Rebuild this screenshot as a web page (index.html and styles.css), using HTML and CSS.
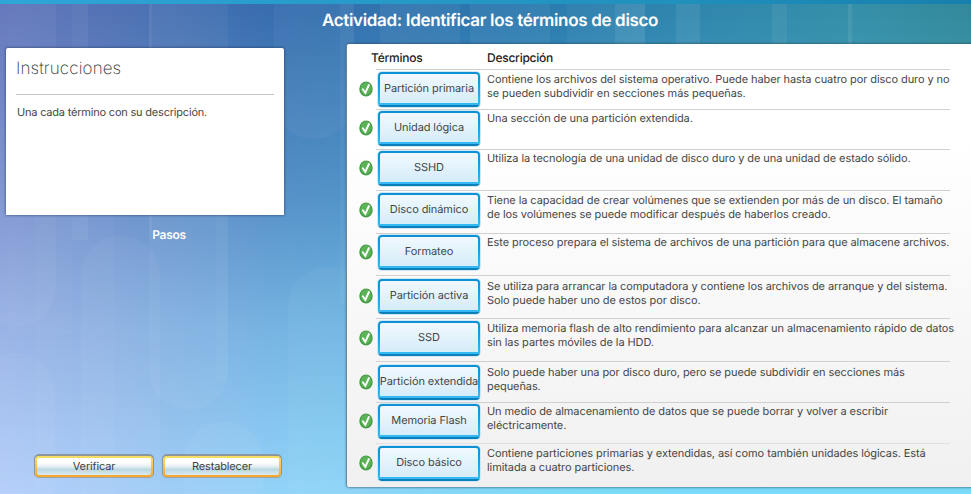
FILE: index.html
```html
<!DOCTYPE html>
<html lang="es">
<head>
<meta charset="utf-8">
<title>Identificar los términos de disco</title>
<link rel="stylesheet" href="styles.css">
</head>
<body>
<svg width="0" height="0" class="defs" aria-hidden="true">
  <symbol id="check" viewBox="0 0 14 16">
    <ellipse cx="7" cy="8" rx="6.7" ry="7.6" fill="#469a45"/>
    <ellipse cx="7" cy="7.6" rx="5.5" ry="6.3" fill="#5bb257"/>
    <path d="M3.8 8.3 L6.3 11.8 L9.9 4" fill="none" stroke="#fff" stroke-width="1.9" stroke-linecap="round"/>
  </symbol>
</svg>
<div class="app">
  <div class="backdrop">
    <div class="glow"></div>
    <svg class="pills" width="971" height="494" fill="#fff" fill-opacity=".04">
      <rect x="-22" y="-60" width="78" height="387" rx="39"/>
      <rect x="8" y="4" width="64" height="330" fill-opacity=".02"/>
      <rect x="72" y="-60" width="16" height="300" fill-opacity=".05"/>
      <rect x="-24" y="353" width="79" height="200" rx="39"/>
      <rect x="35" y="190" width="79" height="380" fill-opacity=".025"/>
      <rect x="81" y="236" width="79" height="320" rx="39"/>
      <rect x="149" y="-60" width="79" height="470" rx="39"/>
      <rect x="149" y="-60" width="3" height="300" fill-opacity=".05"/>
      <rect x="216" y="200" width="12" height="180" fill-opacity=".03"/>
      <rect x="184" y="421" width="79" height="200" rx="39"/>
      <rect x="274" y="-60" width="80" height="199" rx="39"/>
      <rect x="288" y="267" width="80" height="400" rx="39"/>
      <rect x="340" y="4" width="14" height="300"/>
      <rect x="380" y="4" width="80" height="60" fill-opacity=".05"/>
      <rect x="470" y="4" width="80" height="60" fill-opacity=".05"/>
      <rect x="567" y="4" width="48" height="60" fill-opacity=".035"/>
      <rect x="615" y="4" width="30" height="60" fill-opacity=".1"/>
      <rect x="676" y="4" width="24" height="60" fill-opacity=".07"/>
      <rect x="772" y="4" width="15" height="60" fill-opacity=".06"/>
      <rect x="848" y="4" width="4" height="60" fill-opacity=".08"/>
    </svg>
  </div>
  <h1 class="title"><span>Actividad: Identificar los términos de disco</span></h1>
  <main class="layout">
    <section class="side">
      <article class="card">
        <h2><span>Instrucciones</span></h2>
        <p><span>Una cada término con su descripción.</span></p>
      </article>
      <h3 class="steps"><span>Pasos</span></h3>
      <div class="actions">
        <button><span>Verificar</span></button>
        <button><span>Restablecer</span></button>
      </div>
    </section>
    <section class="panel">
      <header class="head"><span class="h-term">Términos</span><span>Descripción</span></header>
      <div class="rows">
        <div class="row g3"><svg class="ok"><use href="#check"/></svg><div class="body"><div class="term"><span>Partición primaria</span></div><p>Contiene los archivos del sistema operativo. Puede haber hasta cuatro por disco duro y no<br>se pueden subdividir en secciones más pequeñas.</p></div></div>
        <div class="row g2"><svg class="ok"><use href="#check"/></svg><div class="body"><div class="term"><span>Unidad lógica</span></div><p>Una sección de una partición extendida.</p></div></div>
        <div class="row g2"><svg class="ok"><use href="#check"/></svg><div class="body"><div class="term"><span>SSHD</span></div><p>Utiliza la tecnología de una unidad de disco duro y de una unidad de estado sólido.</p></div></div>
        <div class="row g3"><svg class="ok"><use href="#check"/></svg><div class="body"><div class="term"><span>Disco dinámico</span></div><p>Tiene la capacidad de crear volúmenes que se extienden por más de un disco. El tamaño<br>de los volúmenes se puede modificar después de haberlos creado.</p></div></div>
        <div class="row g2"><svg class="ok"><use href="#check"/></svg><div class="body"><div class="term"><span>Formateo</span></div><p>Este proceso prepara el sistema de archivos de una partición para que almacene archivos.</p></div></div>
        <div class="row g4"><svg class="ok"><use href="#check"/></svg><div class="body"><div class="term"><span>Partición activa</span></div><p>Se utiliza para arrancar la computadora y contiene los archivos de arranque y del sistema.<br>Solo puede haber uno de estos por disco.</p></div></div>
        <div class="row g3"><svg class="ok"><use href="#check"/></svg><div class="body"><div class="term"><span>SSD</span></div><p>Utiliza memoria flash de alto rendimiento para alcanzar un almacenamiento rápido de datos<br>sin las partes móviles de la HDD.</p></div></div>
        <div class="row g4"><svg class="ok"><use href="#check"/></svg><div class="body"><div class="term"><span>Partición extendida</span></div><p>Solo puede haber una por disco duro, pero se puede subdividir en secciones más<br>pequeñas.</p></div></div>
        <div class="row g2"><svg class="ok"><use href="#check"/></svg><div class="body"><div class="term"><span>Memoria Flash</span></div><p>Un medio de almacenamiento de datos que se puede borrar y volver a escribir<br>eléctricamente.</p></div></div>
        <div class="row g3 last"><svg class="ok"><use href="#check"/></svg><div class="body"><div class="term"><span>Disco básico</span></div><p>Contiene particiones primarias y extendidas, así como también unidades lógicas. Está<br>limitada a cuatro particiones.</p></div></div>
      </div>
    </section>
  </main>
</div>
</body>
</html>
```
FILE: styles.css
```css
* { box-sizing: border-box; }
body { margin: 0; font-family: Inter, "Liberation Sans", sans-serif; color: #464646; text-rendering: geometricPrecision; }
h1, h2, h3, p { margin: 0; }
.defs { position: absolute; }
.app { position: relative; width: 971px; height: 494px; overflow: hidden; border-top: 4px solid #279bcc; border-image: linear-gradient(90deg, #2ea6d8, #2090bd 70%, #177fae) 1; }
.backdrop { position: absolute; inset: 0; z-index: -1; background: linear-gradient(90deg, #6074ba 0, #4f72b4 130px, #376dae 270px, #2a77ae 500px, #2e84ae 650px, #358fa8 860px, #33899a 971px); }
.glow { position: absolute; inset: 0; background: linear-gradient(90deg, #b4cffa 0, #a2cdf6 150px, #90d4f9 300px, #7adcf9 600px, #7adcfa 971px); mask-image: linear-gradient(180deg, transparent 0, rgba(0,0,0,.36) 40%, rgba(0,0,0,.7) 67%, #000 100%); }
.pills { position: absolute; top: -4px; left: 0; }

.title { height: 40px; padding-top: 7px; padding-left: 9px; text-align: center; color: #fff; font-size: 17px; line-height: 20px; font-weight: 600; letter-spacing: -.33px; }
.layout { display: flex; height: 450px; }
.side { flex: none; width: 347px; padding: 4px 0 0 6px; display: flex; flex-direction: column; }
.card { width: 278px; height: 167px; padding: 8px 10px; background: #fff; border-radius: 2px 2px 0 0; box-shadow: 0 0 3px rgba(20,35,70,.75); }
.card h2 { height: 39px; border-bottom: 1px solid #c5c5c5; font-size: 17px; line-height: 25px; padding-top: 1px; font-weight: 200; letter-spacing: .1px; color: #333; }
.card p { padding: 9px 1px; font-size: 11px; line-height: 16px; letter-spacing: -.2px; }
.steps { width: 326px; margin-top: 12px; text-align: center; font-size: 12px; line-height: 16px; font-weight: 600; color: #fff; letter-spacing: -.3px; }
.actions { display: flex; gap: 10px; margin: 213px 0 0 29px; }
.actions button { width: 118px; height: 21px; padding: 0; border: 2px solid transparent; border-radius: 4px; font: 11px/17px Inter, sans-serif; letter-spacing: -.15px; color: #404040; text-rendering: geometricPrecision; background: linear-gradient(#fff 25%, #e5eff3 50%, #bad8e3 68%, #dbe9ef 100%) padding-box, linear-gradient(#f8df67, #f7a62e) border-box; box-shadow: 0 -1px 0 1px #8b969d, 0 0 0 1px #99a3a8; }

.panel { flex: none; width: 640px; height: 443px; padding: 6px 0 0 11px; background: linear-gradient(#fff 0, #fff 22%, #f8f8f8 60%, #f0f0f0); box-shadow: -1px 0 1px #6c8798, 0 0 3px rgba(20,40,60,.8); border-radius: 2px; }
.head { display: flex; height: 19px; font-size: 12px; line-height: 16px; font-weight: 500; letter-spacing: -.25px; color: #222; }
.h-term { width: 116px; margin-left: 13px; }
.rows { display: grid; grid-template-rows: 40px 40px 41px 43px 42px 43px 43px 41px 41px 44px; }
.row { display: flex; }
.ok { width: 14px; height: 16px; margin: 9px 3px 0 1px; flex: none; }
.body { display: flex; width: 574px; border-top: 1px solid #d0d0d0; white-space: nowrap; }
.g2 .body { padding-top: 1px; }
.g3 .body { padding-top: 2px; }
.g4 .body { padding-top: 3px; }
.g2 .ok { margin-top: 11px; }
.g3 .ok { margin-top: 12px; }
.g4 .ok { margin-top: 13px; }
.last .body { border-top-color: #e0e0e0; }
.term { display: flex; justify-content: center; flex: none; width: 102px; height: 35px; padding-top: 7px; margin: 0 7px 0 2px; border: 2px solid transparent; border-bottom-width: 4px; border-radius: 4px; font-size: 11px; line-height: 14px; letter-spacing: -.09px; background: linear-gradient(#f1f9fe, #d5ecf9) padding-box, linear-gradient(#0d90d3, #1a9fe0 45%, #35baf4 93%, #0b7fba 95%) border-box; box-shadow: 0 0 0 1px #cfe8f5; }
.body p { font-size: 11px; line-height: 14px; letter-spacing: -.085px; }
```
